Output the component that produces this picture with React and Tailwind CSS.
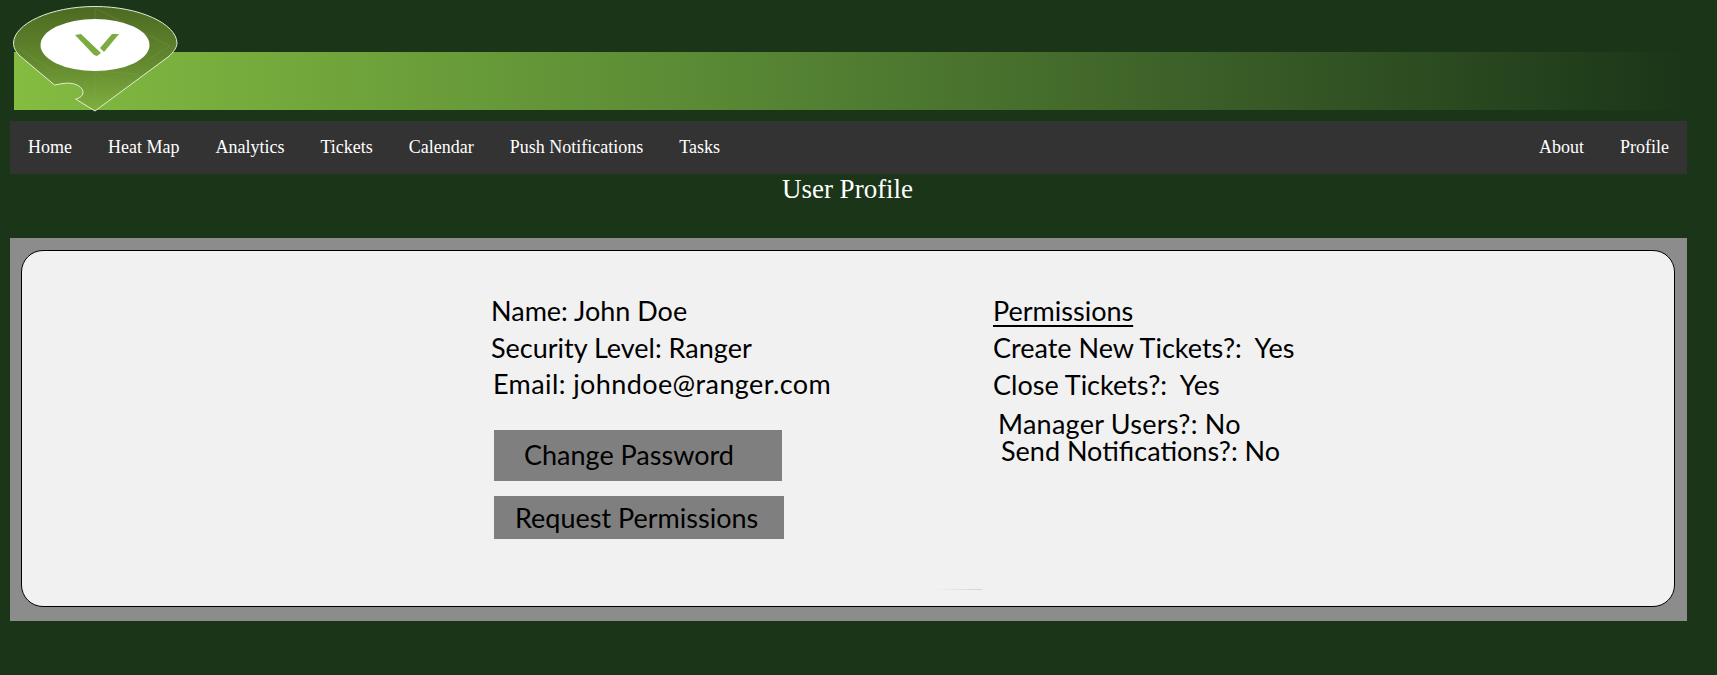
import React from 'react';

const navLeft = ['Home', 'Heat Map', 'Analytics', 'Tickets', 'Calendar', 'Push Notifications', 'Tasks'];
const navRight = ['About', 'Profile'];

const NavLink = ({ label }) => (
  <a className="text-white text-lg leading-[53px] px-[18px] whitespace-nowrap">{label}</a>
);

const Logo = () => (
  <svg className="absolute left-[12px] top-[5px]" width="168" height="108" viewBox="12 5 168 108">
    <defs>
      <linearGradient id="pin" x1="0" y1="0" x2="0" y2="1">
        <stop offset="0" stopColor="#4c6a22" />
        <stop offset="0.55" stopColor="#64892f" />
        <stop offset="1" stopColor="#7fb03f" />
      </linearGradient>
    </defs>
    <path
      d="M95 111 L75.500 99 C80 98.500 83.500 95 83 91.500 C81.500 85 72 82 63 83.500 L54.500 85 L20 56 C15 51 13.500 47 13.500 43 C14 24 50 6.500 95 6.500 C140 6.500 176.500 24 177 43 C177 47 174 52 168 57 Z"
      fill="url(#pin)"
      stroke="#e4ecd8"
      strokeWidth="1"
    />
    {/* faint facets */}
    <g fill="none" stroke="#8aa85a" strokeOpacity="0.3" strokeWidth="0.8">
      <path d="M95 8 L95 22 M95 8 L170 46 L148 60" />
      <path d="M17 47 L55 72 L75 64" />
      <path d="M95 71 L137 74 L119 92 L95 71 L95 110" />
      <path d="M88 78 L76 99" />
    </g>
    <ellipse cx="95" cy="45" rx="54.500" ry="26" fill="#ffffff" />
    <path d="M75 35 L81 34 L101 53 L97 56 L94 55 Z" fill="#7cab40" />
    <path d="M100 48 L112 34 L119 34 L104 52 Z" fill="#7cab40" />
  </svg>
);

export default function App() {
  return (
    <div className="min-h-[675px] bg-[#1a3518] font-['Liberation_Serif',serif] overflow-hidden">
      {/* header banner with logo on top */}
      <div className="relative h-[121px] pt-[52px] pl-[14px] pr-[27px]">
        <div className="h-[58px] bg-[linear-gradient(to_right,#84bc41,#5a8a35_41%,#3b5f28_71%,#1a3518)]" />
        <Logo />
      </div>

      <div className="mx-[10px] w-[1677px]">
        <nav className="flex justify-between h-[53px] bg-[#333333]">
          <div className="flex">
            {navLeft.map((label) => (
              <NavLink key={label} label={label} />
            ))}
          </div>
          <div className="flex">
            {navRight.map((label) => (
              <NavLink key={label} label={label} />
            ))}
          </div>
        </nav>

        <h1 className="text-white text-[27px] leading-[30px] text-center mt-0 mb-[34px] pr-[2px]">User Profile</h1>

        <div className="bg-[#8c8c8c] h-[383px] pt-[12px] pl-[11px] pr-[12px]">
          <div className="relative h-[357px] bg-[#f1f1f1] border border-black rounded-[22px] flex pl-[469px] pt-[42px] font-['Lato',sans-serif] text-[27px] text-black">
            <div className="w-[503px]">
              <p className="leading-[36px]">Name: John Doe</p>
              <p className="leading-[36px] mt-[1px]">Security Level: Ranger</p>
              <p className="leading-[36px] pl-[2px] tracking-[0.4px]">Email: johndoe@ranger.com</p>
              <button className="block mt-[28px] ml-[3px] w-[288px] h-[51px] bg-[#7f7f7f] text-left pl-[30px]">
                Change Password
              </button>
              <button className="block mt-[15px] ml-[3px] w-[290px] h-[43px] bg-[#7f7f7f] text-left pl-[21px] pt-[2px]">
                Request Permissions
              </button>
            </div>
            <div className="-ml-[1px]">
              <p className="leading-[36px] underline underline-offset-[4px]">Permissions</p>
              <p className="leading-[36px] mt-[1px] whitespace-pre">Create New Tickets?:  Yes</p>
              <p className="leading-[36px] mt-[1px] whitespace-pre">Close Tickets?:  Yes</p>
              <p className="leading-[28px] mt-[7px] pl-[5px] tracking-[0.25px]">Manager Users?: No</p>
              <p className="leading-[26px] pl-[8px]">Send Notifications?: No</p>
            </div>
            <div className="absolute left-[912px] top-[338px] w-[48px] h-px bg-gradient-to-r from-[#f1f1f1] to-[#d4d4d4]" />
          </div>
        </div>
      </div>
    </div>
  );
}
